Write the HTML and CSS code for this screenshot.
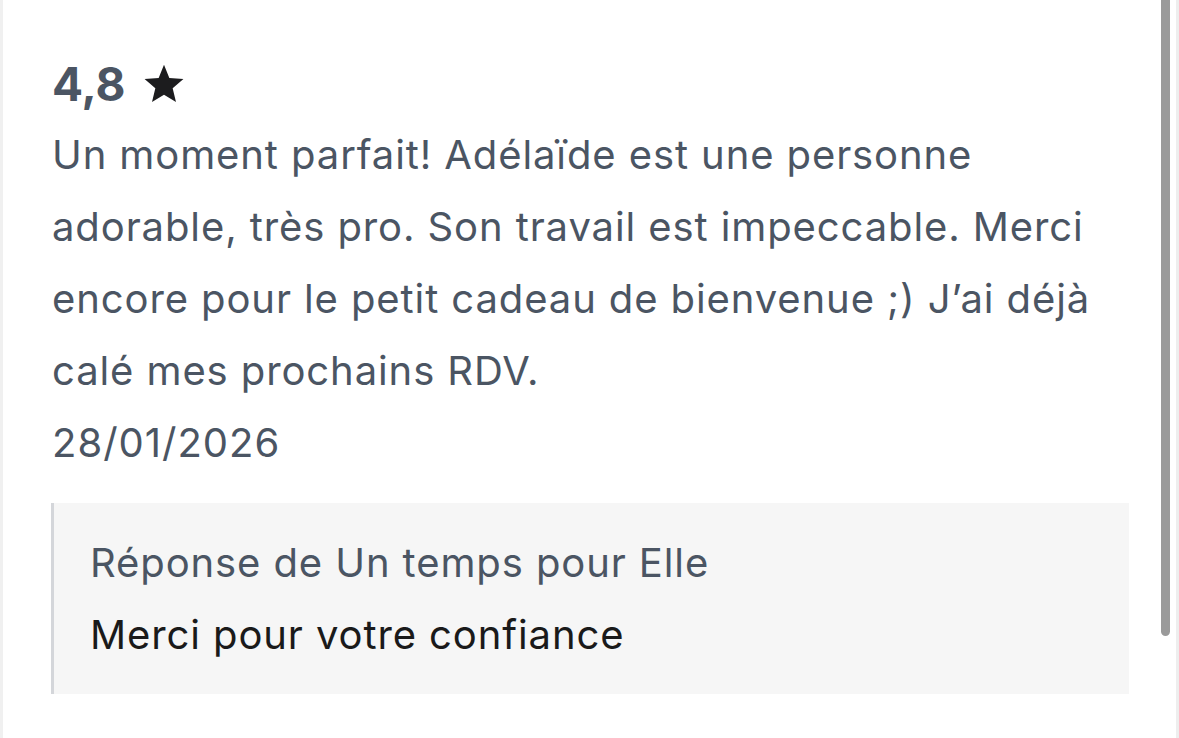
FILE: index.html
```html
<!DOCTYPE html>
<html lang="fr">
<head>
<meta charset="utf-8">
<link rel="stylesheet" href="styles.css">
</head>
<body>
<div class="frame">
  <div class="edge-left"></div>
  <main class="review">
    <div class="rating">
      <span class="score">4,8</span>
      <svg class="star" viewBox="0 0 24 24" aria-hidden="true"><path d="M12 1.6l3.05 7.5 8.05.65-6.15 5.25 1.9 7.9L12 18.7l-6.85 4.2 1.9-7.9L.9 9.75l8.05-.65z"/></svg>
    </div>
    <p class="comment">Un moment parfait! Adélaïde est une personne adorable, très pro. Son travail est impeccable. Merci encore pour le petit cadeau de bienvenue ;) J’ai déjà calé mes prochains RDV.</p>
    <div class="date">28/01/2026</div>
    <div class="reply">
      <div class="reply-title">Réponse de Un temps pour Elle</div>
      <div class="reply-text">Merci pour votre confiance</div>
    </div>
  </main>
  <div class="scroll-track"><div class="scroll-thumb"></div></div>
  <div class="edge-right"></div>
</div>
</body>
</html>
```
FILE: styles.css
```css
html, body {
  margin: 0;
  padding: 0;
  background: #ffffff;
}
body {
  font-family: Inter, "Noto Sans", sans-serif;
  width: 1179px;
  height: 738px;
  overflow: hidden;
}
.frame {
  display: flex;
  height: 738px;
}
.edge-left {
  width: 3px;
  background: #f0f0f0;
  flex: none;
}
.review {
  flex: 1;
  padding: 59px 0 0 49px;
  box-sizing: border-box;
  min-width: 0;
}
.rating {
  display: flex;
  align-items: center;
  gap: 17px;
  height: 50px;
}
.score {
  font-size: 46px;
  font-weight: 700;
  color: #4b5563;
}
.star {
  fill: #1c1c1e;
  width: 42px;
  height: 42px;
  margin-top: -3px;
}
.comment {
  margin: 10px 0 0;
  font-size: 40px;
  line-height: 72px;
  letter-spacing: 0.9px;
  color: #4b5563;
  width: 1077px;
}
.date {
  font-size: 40px;
  line-height: 72px;
  letter-spacing: 1px;
  color: #4b5563;
}
.reply {
  margin: 24px 0 0 -1px;
  width: 1078px;
  background: #f6f6f6;
  border-left: 3px solid #d4d6da;
  box-sizing: border-box;
  padding: 24px 40px 23px 36px;
}
.reply-title {
  font-size: 40px;
  line-height: 72px;
  letter-spacing: 0.9px;
  color: #4b5563;
}
.reply-text {
  font-size: 40px;
  line-height: 72px;
  letter-spacing: 0.9px;
  color: #1a1a1a;
}
.scroll-track {
  width: 32px;
  flex: none;
}
.scroll-thumb {
  margin-left: 17px;
  width: 9px;
  height: 636px;
  background: #9a9a9a;
  border-radius: 0 0 5px 5px;
}
.edge-right {
  width: 3px;
  background: #eeeeee;
  flex: none;
}
```
